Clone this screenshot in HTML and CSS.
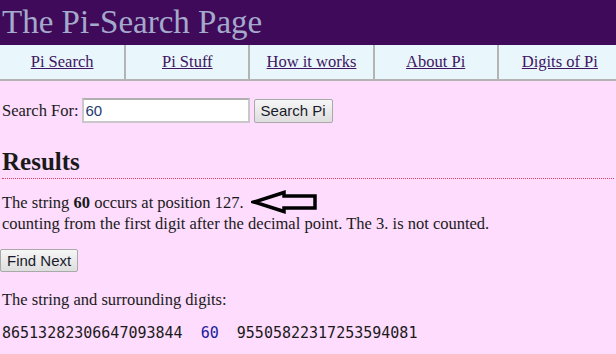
FILE: index.html
```html
<!DOCTYPE html>
<html>

<head>
    <title>The Pi-Search Page</title>
    <link rel="stylesheet" href="styles.css">
</head>

<body>
    <h1 class="banner">The Pi-Search Page</h1>

    <div class="nav">
        <a href="#">Pi Search</a>
        <a href="#">Pi Stuff</a>
        <a href="#">How it works</a>
        <a href="#">About Pi</a>
        <a href="#">Digits of Pi</a>
    </div>

    <div class="content">
        <form class="search">
            <label for="searchFor">Search For:</label>
            <input type="text" id="searchFor" value="60">
            <button type="button">Search Pi</button>
        </form>

        <h2 class="results">Results</h2>

        <p class="found">
            The string <b>60</b> occurs at position 127.
            <svg class="arrow" width="68" height="24" viewBox="0 0 68 24">
                <polygon points="3,12 33,2.5 33,6 64,6 64,18 33,18 33,21.5" fill="none" stroke="#000" stroke-width="3.5" stroke-linejoin="miter"/>
            </svg>
            <br>
            counting from the first digit after the decimal point. The 3. is not counted.
        </p>

        <button type="button" class="next">Find Next</button>

        <p class="around">The string and surrounding digits:</p>

        <pre class="digits">86513282306647093844  <span class="hit">60</span>  95505822317253594081</pre>
    </div>
</body>
</html>
```

FILE: styles.css
```css
body {
    margin: 0;
    overflow-x: hidden;
    font-family: "Liberation Serif", "Times New Roman", serif;
    font-size: 16.5px;
    color: #1a1a1a;
    background-color: #fddcfd;
}

.banner {
    margin: 0;
    height: 45px;
    padding-left: 2px;
    line-height: 45px;
    font-size: 33px;
    font-weight: normal;
    color: #a4aacb;
    background-color: #400a5a;
}

.nav {
    display: grid;
    grid-template-columns: repeat(5, 124.2px);
    width: 621px;
    height: 34px;
    background-color: #e9f7fd;
    border-bottom: 2px solid #b4b4b4;
}

.nav a {
    display: flex;
    align-items: center;
    justify-content: center;
    color: #3d1560;
    border-left: 2px solid #b4b4b4;
}

.nav a:first-child {
    border-left: none;
}

.content {
    padding: 0 2px;
}

.search {
    display: flex;
    align-items: center;
    gap: 4px;
    margin: 17px 0 0;
}

.search input {
    width: 160px;
    height: 19px;
    padding: 1px 2px;
    margin: 0 0 0 -1px;
    font-family: "Liberation Sans", Arial, sans-serif;
    font-size: 15px;
    color: #1e3a70;
    border: 2px solid #c8c8c8;
    border-top-color: #b0b0b0;
    background: #fff;
}

.search button, .next {
    height: 24px;
    padding: 0 6px;
    font-family: "Liberation Sans", Arial, sans-serif;
    font-size: 15px;
    color: #1a1a2a;
    border: 1px solid #a9a9a9;
    border-radius: 2px;
    background: linear-gradient(#f6f6f6, #dedede);
}

.results {
    margin: 25px 0 0;
    padding-bottom: 2px;
    font-size: 25px;
    line-height: 28px;
    border-bottom: 1px dotted #e2405a;
}

.found {
    margin: 11px 0 0;
    line-height: 19px;
}

.arrow {
    vertical-align: -6px;
    margin-left: 3px;
}

.next {
    margin: 16px 0 0 -2px;
    height: 23px;
}

.around {
    margin: 18px 0 0;
}

.digits {
    margin: 14px 0 0;
    font-family: "DejaVu Sans Mono", monospace;
    font-size: 15px;
}

.hit {
    color: #1a1aa0;
}
```
